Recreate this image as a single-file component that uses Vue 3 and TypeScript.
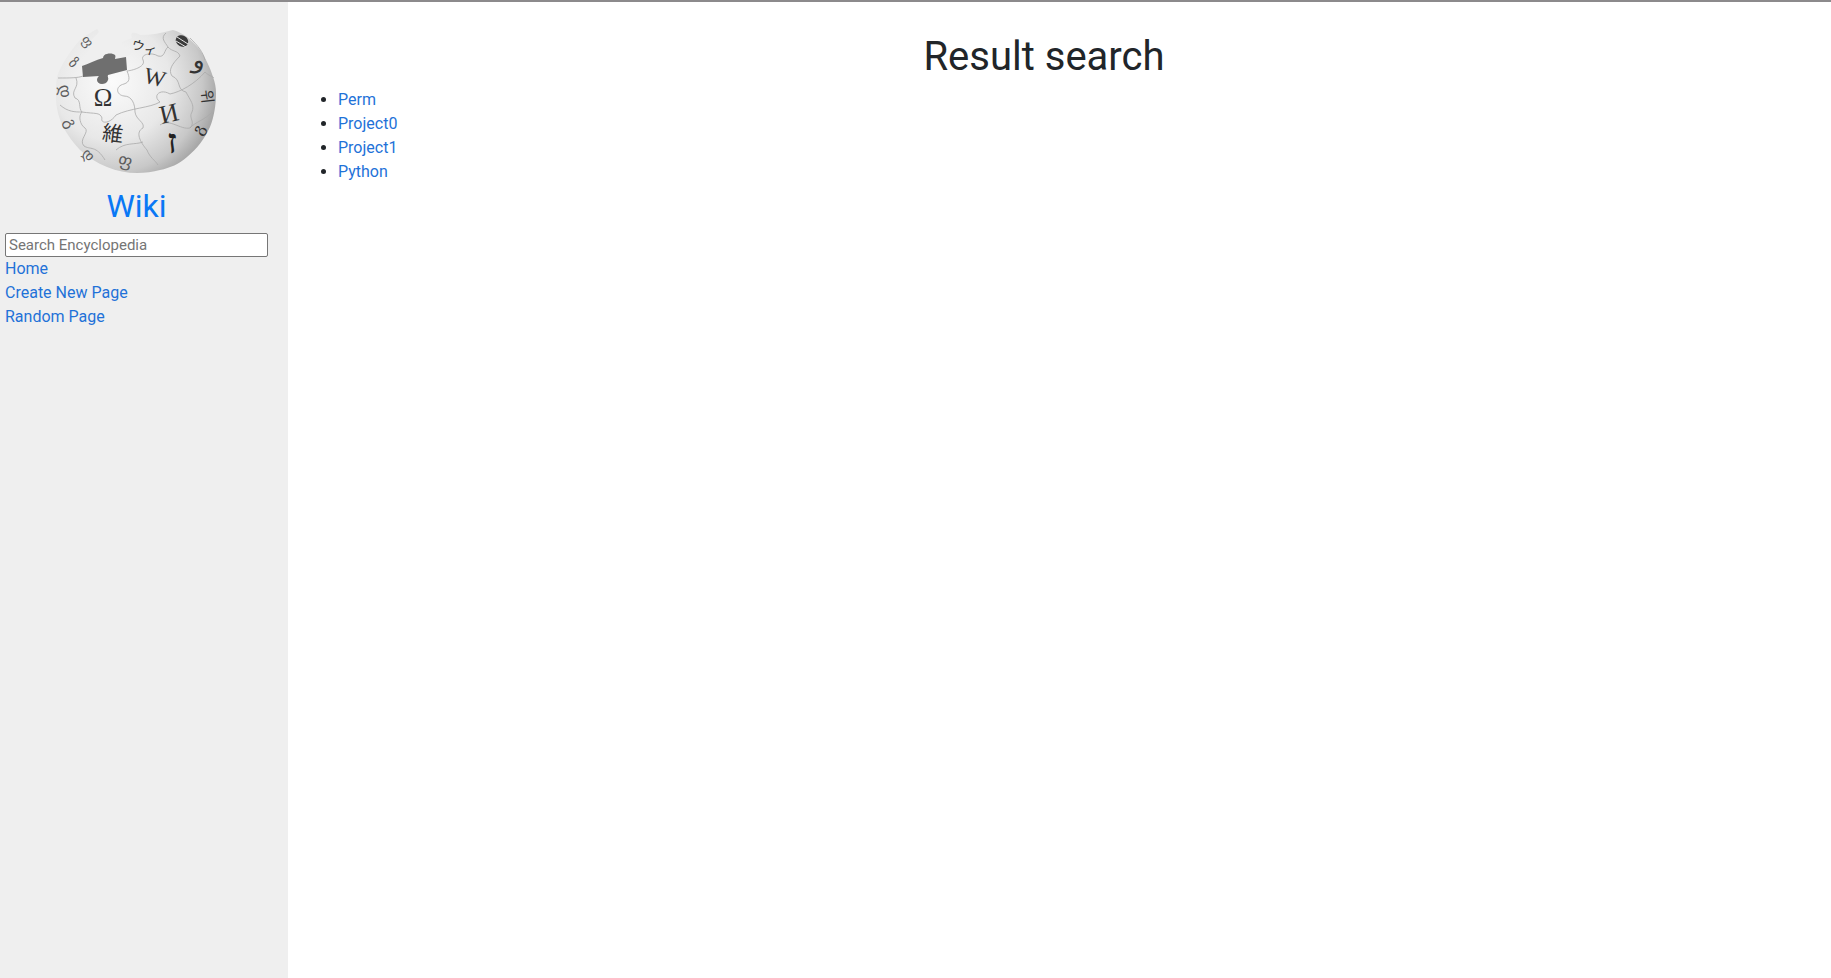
<script setup lang="ts">
interface Glyph {
  ch: string
  x: number
  y: number
  size: number
  rot: number
  kind?: "cjk" | "light" | "bold"
}

// letters on the puzzle globe, in page coordinates
const glyphs: Glyph[] = [
  { ch: "Ω", x: 103, y: 106, size: 25, rot: 0 },
  { ch: "W", x: 153, y: 85, size: 23, rot: 14 },
  { ch: "И", x: 171, y: 122, size: 26, rot: -13 },
  { ch: "維", x: 112, y: 141, size: 21, rot: 7, kind: "cjk" },
  { ch: "ウィ", x: 143, y: 52, size: 13, rot: 18, kind: "cjk" },
  { ch: "ז", x: 173, y: 153, size: 34, rot: -4, kind: "bold" },
  { ch: "و", x: 198, y: 68, size: 25, rot: 14 },
  { ch: "위", x: 202, y: 97, size: 15, rot: 84, kind: "cjk" },
  { ch: "დ", x: 60, y: 92, size: 16, rot: 82, kind: "light" },
  { ch: "გ", x: 66, y: 125, size: 16, rot: 68, kind: "light" },
  { ch: "ზ", x: 70, y: 66, size: 14, rot: 50, kind: "light" },
  { ch: "ფ", x: 84, y: 44, size: 13, rot: 52, kind: "light" },
  { ch: "ფ", x: 124, y: 166, size: 17, rot: 14, kind: "light" },
  { ch: "დ", x: 85, y: 158, size: 14, rot: 48, kind: "light" },
  { ch: "გ", x: 203, y: 132, size: 16, rot: -60 },
]

const puzzleLines: string[] = [
  "M127 71C135 70 146 66 143 60C140 54 152 52 158 56C165 58 164 50 168 47C165 42 160 38 166 33",
  "M127 71C130 78 130 82 124 84C115 86 116 95 124 96C132 96 135 104 135 112C136 120 145 122 143 128C135 132 140 142 147 150C150 158 155 160 158 165",
  "M82 112C95 114 100 112 102 118C100 124 110 124 116 115C130 108 150 108 160 102C152 96 160 88 170 94C180 92 195 84 205 72",
  "M168 47C172 52 178 50 180 56C172 64 168 70 172 76C182 80 176 90 186 92C190 100 195 105 192 112C188 118 196 122 190 128",
  "M58 78C70 78 78 78 83 76M76 78C80 88 70 90 75 98C82 100 78 108 82 112C78 116 80 125 85 128C90 132 78 140 84 146C90 150 96 145 105 160",
  "M160 125C170 118 180 130 190 128C195 122 205 120 212 112M116 150C125 142 135 145 143 142M60 105C68 112 75 112 82 112",
  "M190 38C198 46 203 52 205 60M205 72C209 76 212 76 214 78",
]

const navLinks: string[] = ["Home", "Create New Page", "Random Page"]
const results: string[] = ["Perm", "Project0", "Project1", "Python"]

const glyphTransform = (g: Glyph) => `rotate(${g.rot} ${g.x} ${g.y})`
</script>

<template>
  <div class="layout">
    <aside class="sidebar">
      <svg class="logo" viewBox="46 22 180 164" role="img" aria-label="Wikipedia globe">
        <defs>
          <radialGradient id="globeFill" gradientUnits="userSpaceOnUse" cx="112" cy="82" r="106">
            <stop offset="0" stop-color="#fbfbfb" />
            <stop offset="0.55" stop-color="#e8e8e8" />
            <stop offset="0.85" stop-color="#c8c8c8" />
            <stop offset="1" stop-color="#a8a8a8" />
          </radialGradient>
        </defs>
        <path
          fill="url(#globeFill)"
          d="M97 29C99 31 99 32 98 33C95 37 91 39 90 43C89 47 90 50 88 53C85 57 82 60 82 66L82 77L99 76C97 78 96 79 97 80C98 84 102 85 104 84C108 83 109 81 108 75L127 70L126 57C129 55 132 54 132 52C128 50 124 49 123 48C122 46 122 44 122 42C125 41 129 39 132 38C131 36 131 34 132 33C135 32 138 34 140 35C151 35 162 33 173 30C177 31 183 34 187 37C192 41 196 45 200 50C205 57 210 67 213 77C215 82 216 88 216 93C216 105 214 117 210 127C205 138 197 149 187 157C179 164 170 168 160 170C153 172 145 173 137 173C127 173 117 171 107 167C97 163 88 157 80 150C73 143 68 135 63 127C59 118 56 108 56 97C56 90 56 84 57 77C59 70 63 63 67 57C71 51 75 45 80 40C85 36 91 32 97 29Z"
        />
        <path
          fill="#6f6f6f"
          d="M82 66C88 64 96 60 103 58C103 56 105 54 107 54C110 53 114 54 115 55C116 56 115 58 115 59L126 57L127 70L108 75C107 77 109 78 108 80C107 83 104 84 102 84C99 84 97 82 97 80C97 78 98 77 99 76L83 77Z"
        />
        <path v-for="(line, i) in puzzleLines" :key="i" class="seam" :d="line" />
        <ellipse cx="182" cy="41" rx="6.5" ry="5.5" transform="rotate(30 182 41)" fill="#3c3c3c" />
        <path class="stripes" d="M177 37L188 44M176 41L186 47" />
        <text
          v-for="(g, i) in glyphs"
          :key="i"
          class="glyph"
          :class="g.kind"
          :x="g.x"
          :y="g.y"
          :font-size="g.size"
          :transform="glyphTransform(g)"
        >{{ g.ch }}</text>
      </svg>
      <h2 class="brand">Wiki</h2>
      <input class="search" type="text" placeholder="Search Encyclopedia" />
      <nav>
        <div v-for="link in navLinks" :key="link">
          <a href="#">{{ link }}</a>
        </div>
      </nav>
    </aside>
    <main class="content">
      <h1>Result search</h1>
      <ul>
        <li v-for="item in results" :key="item">
          <a href="#">{{ item }}</a>
        </li>
      </ul>
    </main>
  </div>
</template>

<style scoped>
.layout {
  display: flex;
  height: 978px;
  border-top: 2px solid #8c8a8c;
  box-sizing: border-box;
  font-family: Roboto, "Liberation Sans", sans-serif;
  font-size: 16px;
  line-height: 24px;
  color: #212529;
}

.sidebar {
  width: 288px;
  flex: none;
  box-sizing: border-box;
  padding: 0 20px 0 5px;
  background-color: #efefef;
}

.logo {
  display: block;
  width: 180px;
  height: 164px;
  margin: 20px 0 1px 41px;
}

.seam {
  fill: none;
  stroke: #a9a9a9;
  stroke-width: 0.8;
}

.stripes {
  fill: none;
  stroke: #e4e4e4;
  stroke-width: 1;
}

.glyph {
  font-family: "Liberation Serif", "DejaVu Serif", serif;
  text-anchor: middle;
  fill: #333;
}

.glyph.cjk {
  font-family: "Noto Sans CJK JP", "Noto Sans CJK KR", sans-serif;
}

.glyph.light {
  font-family: "DejaVu Sans", sans-serif;
  fill: #5c5c5c;
}

.glyph.bold {
  font-weight: 700;
  fill: #222;
}

.brand {
  margin: 0 0 8px;
  font-size: 32px;
  font-weight: 400;
  line-height: 38.4px;
  text-align: center;
  color: #0a78f5;
}

.search {
  display: block;
  width: 100%;
  height: 24px;
  box-sizing: border-box;
  padding: 1px 3px;
  border: 1px solid #767676;
  border-radius: 2px;
  background: #fff;
  font-family: inherit;
  font-size: 15px;
  outline: none;
}

.search::placeholder {
  color: #757575;
  opacity: 1;
}

a {
  color: #1f72d8;
  text-decoration: none;
}

.content {
  flex: 1;
  padding: 0 41px 0 10px;
}

h1 {
  margin: 31px 0 7px;
  font-size: 40px;
  font-weight: 400;
  line-height: 48px;
  text-align: center;
}

ul {
  margin: 0;
  padding-left: 40px;
}
</style>

<style>
html,
body {
  margin: 0;
  background: #fff;
}
</style>
